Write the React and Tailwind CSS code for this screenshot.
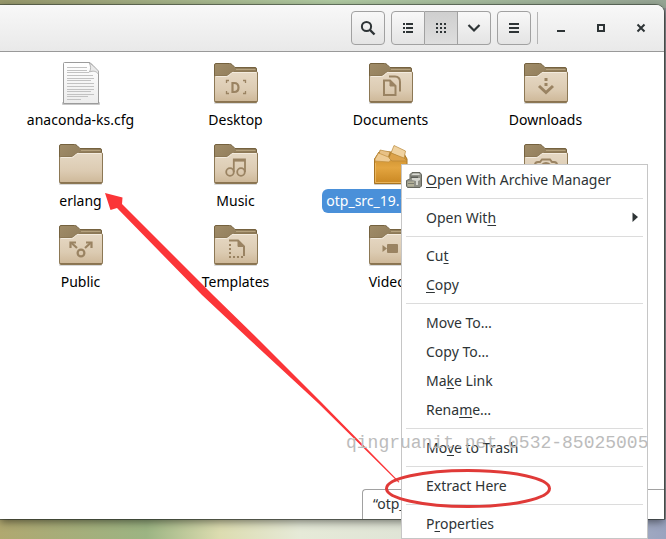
import React from "react";

const GLYPH = "#9a8362";

function Defs() {
  return (
    <svg className="absolute size-0" aria-hidden="true">
      <defs>
        <linearGradient id="front" x1="0" y1="0" x2="0" y2="1">
          <stop offset="0" stopColor="#e6d9c5" />
          <stop offset="0.6" stopColor="#dccbb2" />
          <stop offset="1" stopColor="#cdb797" />
        </linearGradient>
        <linearGradient id="back" x1="0" y1="0" x2="1" y2="1">
          <stop offset="0" stopColor="#a08c68" />
          <stop offset="1" stopColor="#7d6a4b" />
        </linearGradient>
        <linearGradient id="paper" x1="0" y1="0" x2="0" y2="1">
          <stop offset="0" stopColor="#ffffff" />
          <stop offset="1" stopColor="#ececec" />
        </linearGradient>
        <linearGradient id="carton" x1="0" y1="0" x2="0" y2="1">
          <stop offset="0" stopColor="#c58a2c" />
          <stop offset="0.5" stopColor="#e3a540" />
          <stop offset="1" stopColor="#c98722" />
        </linearGradient>
      </defs>
    </svg>
  );
}

function Folder({ children }) {
  return (
    <svg width="47" height="48" viewBox="0 0 47 48" aria-hidden="true">
      <rect x="2" y="41" width="43" height="3" rx="1" fill="#000" opacity="0.15" />
      <path d="M2.500 40V5Q2.500 3.500 4 3.500H17.500Q19 3.500 20 4.500L23 7.500H43Q44.500 7.500 44.500 9V40Z" fill="url(#back)" stroke="#75623f" />
      <path d="M24 9.500H43.500" stroke="#b5a27e" />
      <path d="M2.500 17Q2.500 15.500 4 15.500H14Q15.500 15.500 16.500 14.500L19 12.500Q20 11.500 21.500 11.500H44Q45.500 11.500 45.500 13V40Q45.500 42.500 44 42.500H4Q2.500 42.500 2.500 40Z" fill="url(#front)" stroke="#8c7855" />
      <path d="M3.500 16.500H14.500Q16 16.500 17 15.500L20 12.500H44.500" fill="none" stroke="#f3ebde" />
      <path d="M3 41.500H45" stroke="#8a7350" />
      {children}
    </svg>
  );
}

function Page() {
  return (
    <svg width="47" height="48" viewBox="0 0 47 48" aria-hidden="true">
      <rect x="5" y="42" width="38" height="3" rx="1" fill="#000" opacity="0.22" />
      <path d="M7.500 2.500H33L41.500 11.500V43.500H6.500V3.500Q6.500 2.500 7.500 2.500Z" fill="url(#paper)" stroke="#9b9b9b" />
      <path d="M10 7.500H30M10 10.500H30M10 12.500H32M10 15.500H36M10 18.500H37M10 20.500H34M10 23.500H37M10 26.500H37M10 29.500H37M10 31.500H34M10 34.500H37M10 36.500H31M10 39.500H24" stroke="#c2c2c2" />
      <path d="M32 2.500C34 6 34 9 32.500 12C36 10.500 39 11 41.500 14V11Q36 5 32 2.500Z" fill="#e9e9e9" stroke="#a5a5a5" strokeWidth="0.8" />
    </svg>
  );
}

function Carton() {
  return (
    <svg width="47" height="48" viewBox="0 0 47 48" aria-hidden="true">
      <rect x="7" y="41" width="33" height="3" rx="1" fill="#000" opacity="0.2" />
      <path d="M7.500 18L12 11H36L40 18V42.500H7.500Z" fill="url(#carton)" stroke="#a87422" />
      <path d="M12 12L26 13L24 19H10Z" fill="#a87628" />
      <path d="M13 9L23 11L21 17L12 14Z" fill="#e8c186" stroke="#b98838" strokeWidth="0.7" />
      <path d="M8 18L11.500 12L25 17.500L22 21L8 20Z" fill="#eecb94" stroke="#c28f3d" strokeWidth="0.7" />
      <path d="M27 4.500L38.500 10L37 18L24 12Z" fill="#f0d2a0" stroke="#b98838" strokeWidth="0.7" />
      <path d="M24 12L37 17L40 20L25 20L22 17Z" fill="#dca24a" stroke="#b98838" strokeWidth="0.7" />
      <path d="M8.500 22V41.500H39" fill="none" stroke="#edbd68" strokeWidth="0.8" />
    </svg>
  );
}

const glyphs = {
  desktop: (
    <g stroke={GLYPH} fill="none">
      <path d="M14.500 23V20.500H17M31 20.500H33.500V23M33.500 31V33.500H31M17 33.500H14.500V31" strokeWidth="1.300" />
      <path d="M20.500 23H22Q26.500 23 26.500 27.500T22 32H20.500Z" strokeWidth="2.200" />
    </g>
  ),
  documents: (
    <g stroke={GLYPH} fill="none" strokeWidth="2">
      <path d="M17 20.500H23L28.500 26V35H17Z" />
      <path d="M23 20.500V26H28.500Z" fill={GLYPH} strokeWidth="1" />
      <path d="M22 16.500H28Q33 16.500 33 22V31.500" />
    </g>
  ),
  downloads: (
    <g stroke={GLYPH} fill="none" strokeWidth="3">
      <path d="M17 26L24 32.500L31 26" />
      <path d="M24 18V21M24 23V26" />
    </g>
  ),
  music: (
    <g stroke={GLYPH} fill="none" strokeWidth="1.800">
      <circle cx="18" cy="31" r="3.800" />
      <circle cx="29" cy="31" r="3.800" />
      <path d="M21.800 31V18.500H33V31" />
      <path d="M22 19.500H33" strokeWidth="2.200" />
    </g>
  ),
  pictures: (
    <g stroke={GLYPH} fill="none" strokeWidth="2">
      <path d="M13 24Q13 21 16 21H18L20 18.500H28L30 21H32Q35 21 35 24V34H13Z" />
      <circle cx="24" cy="27" r="5" />
    </g>
  ),
  public: (
    <g stroke={GLYPH} fill="none" strokeWidth="2.200">
      <circle cx="24" cy="31" r="3.400" />
      <path d="M20 26L14.500 21M28 26L33.500 21" />
      <path d="M13.500 26V20.500H19M29 20.500H34.500V26" />
    </g>
  ),
  templates: (
    <g stroke={GLYPH} fill="none" strokeWidth="2">
      <path d="M17 18.500H26L32 24.500V34" />
      <path d="M26 18V24.500H32Z" fill={GLYPH} strokeWidth="1" />
      <path d="M18 22V36" strokeDasharray="2 2" />
      <path d="M17 35H33" strokeDasharray="2 2" />
    </g>
  ),
  videos: (
    <g fill={GLYPH}>
      <rect x="20" y="22" width="11" height="9" rx="1" />
      <path d="M15.500 23L20 26.500L15.500 30Z" />
    </g>
  ),
};

const files = [
  { name: "anaconda-ks.cfg", icon: <Page /> },
  { name: "Desktop", icon: <Folder>{glyphs.desktop}</Folder> },
  { name: "Documents", icon: <Folder>{glyphs.documents}</Folder> },
  { name: "Downloads", icon: <Folder>{glyphs.downloads}</Folder> },
  { name: "erlang", icon: <Folder /> },
  { name: "Music", icon: <Folder>{glyphs.music}</Folder> },
  { name: "otp_src_19.10.tar.gz", icon: <Carton />, selected: true },
  { name: "Pictures", icon: <Folder>{glyphs.pictures}</Folder> },
  { name: "Public", icon: <Folder>{glyphs.public}</Folder> },
  { name: "Templates", icon: <Folder>{glyphs.templates}</Folder> },
  { name: "Videos", icon: <Folder>{glyphs.videos}</Folder> },
];

function ToolButton({ label, className = "", children }) {
  return (
    <button
      type="button"
      aria-label={label}
      className={`flex h-[34px] items-center justify-center border-[#a1a1a1] ${className}`}
    >
      {children}
    </button>
  );
}

function HeaderBar() {
  const raised = "bg-linear-to-b from-[#f8f8f8] to-[#e4e4e4]";
  return (
    <header className="flex h-[47px] shrink-0 items-center justify-end gap-1.5 rounded-tr-lg border-b border-[#999] bg-linear-to-b from-[#f8f8f8] to-[#e9e9e9] pr-1.5">
      <ToolButton label="Search" className={`w-[34px] rounded border ${raised}`}>
        <svg width="16" height="16" viewBox="0 0 16 16" fill="none" stroke="#2e3436">
          <circle cx="6.500" cy="6.500" r="4.600" strokeWidth="2" />
          <path d="M10 10L14.500 14.500" strokeWidth="2.400" />
        </svg>
      </ToolButton>
      <div className="flex">
        <ToolButton label="List view" className={`w-[34px] rounded-l border ${raised}`}>
          <svg width="16" height="16" viewBox="0 0 16 16" fill="#2e3436">
            <path d="M3 3h2v2H3zM3 7h2v2H3zM3 11h2v2H3zM6 3h7v2H6zM6 7h7v2H6zM6 11h7v2H6z" />
          </svg>
        </ToolButton>
        <ToolButton label="Icon view" className="w-[33px] border-y border-r bg-linear-to-b from-[#cfcfcf] to-[#dedede]">
          <svg width="16" height="16" viewBox="0 0 16 16" fill="#2e3436">
            <path d="M3 3h2v2H3zM7 3h2v2H7zM11 3h2v2h-2zM3 7h2v2H3zM7 7h2v2H7zM11 7h2v2h-2zM3 11h2v2H3zM7 11h2v2H7zM11 11h2v2h-2z" />
          </svg>
        </ToolButton>
        <ToolButton label="View options" className={`w-[33px] rounded-r border-y border-r ${raised}`}>
          <svg width="16" height="16" viewBox="0 0 16 16" fill="none" stroke="#2e3436" strokeWidth="2.200">
            <path d="M2.500 5L8 10.500L13.500 5" />
          </svg>
        </ToolButton>
      </div>
      <ToolButton label="Menu" className={`w-[34px] rounded border ${raised}`}>
        <svg width="16" height="16" viewBox="0 0 16 16" fill="#2e3436">
          <path d="M3 3h10v2H3zM3 7h10v2H3zM3 11h10v2H3z" />
        </svg>
      </ToolButton>
      <div className="h-8 w-px bg-[#b4b4b4]" />
      <ToolButton label="Minimize" className="w-[34px]">
        <svg width="16" height="16" viewBox="0 0 16 16" fill="#2e3436">
          <path d="M4 10h8v2H4z" />
        </svg>
      </ToolButton>
      <ToolButton label="Maximize" className="w-[34px]">
        <svg width="16" height="16" viewBox="0 0 16 16" fill="none" stroke="#2e3436" strokeWidth="2">
          <path d="M5 5h6v6H5z" />
        </svg>
      </ToolButton>
      <ToolButton label="Close" className="w-[34px]">
        <svg width="16" height="16" viewBox="0 0 16 16" fill="none" stroke="#2e3436" strokeWidth="2">
          <path d="M4.500 4.500L11.500 11.500M11.500 4.500L4.500 11.500" />
        </svg>
      </ToolButton>
    </header>
  );
}

function ArchiveIcon() {
  return (
    <svg width="16" height="16" viewBox="0 0 16 16" aria-hidden="true">
      <path d="M4 2.500L6 0.500H14L15.500 2.500V14L14 15.500H1.500L0.500 14V8.500L4 7Z" fill="#8f9087" stroke="#64665d" />
      <path d="M5.500 3L7 1.500H13L14 3Z" fill="#d9dad4" />
      <path d="M5 4.500H12V6H5Z" fill="#5b5d57" />
      <path d="M6 6H14V8L12 9V13H10V9L6 8Z" fill="#d4d5ce" />
      <path d="M1.500 9.500H8V14.500H1.500Z" fill="#b3b199" />
      <path d="M2 11.500H8" stroke="#7b7c6f" />
    </svg>
  );
}

const menu = [
  [{ text: ["", "O", "pen With Archive Manager"], icon: <ArchiveIcon /> }],
  [{ text: ["Open Wit", "h", ""], submenu: true }],
  [{ text: ["Cu", "t", ""] }, { text: ["", "C", "opy"] }],
  [
    { text: ["Move To…", "", ""] },
    { text: ["Copy To…", "", ""] },
    { text: ["Ma", "k", "e Link"] },
    { text: ["Rena", "m", "e…"] },
  ],
  [{ text: ["Mo", "v", "e to Trash"] }],
  [{ text: ["Extract Here", "", ""] }],
  [{ text: ["P", "r", "operties"] }],
];

function ContextMenu() {
  return (
    <div role="menu" className="absolute top-[164px] left-[401px] w-[247px] border border-[#c6c6c6] bg-white text-[#2e3436]">
      {menu.map((group, g) => (
        <div key={g} role="group">
          {g > 0 && <div className="mx-1 my-1 h-px bg-[#dcdcdc]" />}
          {group.map((item) => (
            <button
              key={item.text.join("")}
              type="button"
              role="menuitem"
              className="flex h-[29px] w-full items-center gap-1 px-1 text-left"
            >
              <span className="size-4 shrink-0">{item.icon}</span>
              <span className="flex-1">
                {item.text[0]}
                <span className="underline underline-offset-2">{item.text[1]}</span>
                {item.text[2]}
              </span>
              {item.submenu && (
                <svg width="16" height="16" viewBox="0 0 16 16" fill="#2e3436" aria-hidden="true">
                  <path d="M5.500 2.500L11 7L5.500 12Z" />
                </svg>
              )}
            </button>
          ))}
        </div>
      ))}
    </div>
  );
}

function Annotation() {
  return (
    <svg className="pointer-events-none absolute top-0 left-0" width="666" height="539" viewBox="0 0 666 539" aria-hidden="true">
      <path d="M105 193L122.500 197.500L122 204L213 295L259 340L322 403L399.500 482L398.500 482.500L318 403L250 340L202 295L117 208L110.500 210Z" fill="#fb3538" />
      <ellipse cx="468" cy="488.500" rx="81.500" ry="18" fill="none" stroke="#e03a38" strokeWidth="3" />
    </svg>
  );
}

export default function App() {
  return (
    <div className="relative flex min-h-screen flex-col overflow-hidden bg-[linear-gradient(90deg,#b0a870_0%,#a8ac78_8%,#9cb483_22%,#dcdcb0_33%,#e6ead8_45%,#dfe4d6_62%,#9aa3bf_100%)] pr-0.5 pb-5 font-['Noto_Sans',sans-serif] text-[14px] leading-6">
      <Defs />
      <div className="absolute inset-x-0 top-0 h-24 bg-linear-to-r from-[#97986c] via-[#b0caa2] to-[#96a594]" />
      <div className="absolute top-2 right-0 bottom-5 w-0.5 bg-[#8a8b90]" />
      <main className="relative mt-[5px] flex flex-1 flex-col rounded-tr-lg bg-white shadow-[0_3px_8px_0_rgba(0,0,0,0.5),0_0_0_1px_rgba(60,70,60,0.6)]">
        <HeaderBar />
        <section className="grid grid-cols-[repeat(auto-fill,155px)] gap-y-[9px] pt-2 pl-[3px]">
          {files.map((file) => (
            <button key={file.name} type="button" className="flex flex-col items-center text-black">
              {file.icon}
              <span className={file.selected ? "rounded-md bg-[#4a90d9] px-1 text-white" : "px-1"}>{file.name}</span>
            </button>
          ))}
        </section>
        <footer className="mt-auto h-[30px] w-[302px] self-end overflow-hidden rounded-tl border-t border-l border-[#a1a1a1] bg-white px-2.5 py-0.5 whitespace-nowrap text-[#2e3436]">
          “otp_src_19.10.tar.gz” selected (64.1 MB)
        </footer>
      </main>
      <ContextMenu />
      <Annotation />
      <p className="pointer-events-none absolute top-[431px] left-[346px] font-['Liberation_Mono',monospace] text-[18px] whitespace-pre text-[#bcbcbc]">
        qingruanit.net 0532-85025005
      </p>
    </div>
  );
}
